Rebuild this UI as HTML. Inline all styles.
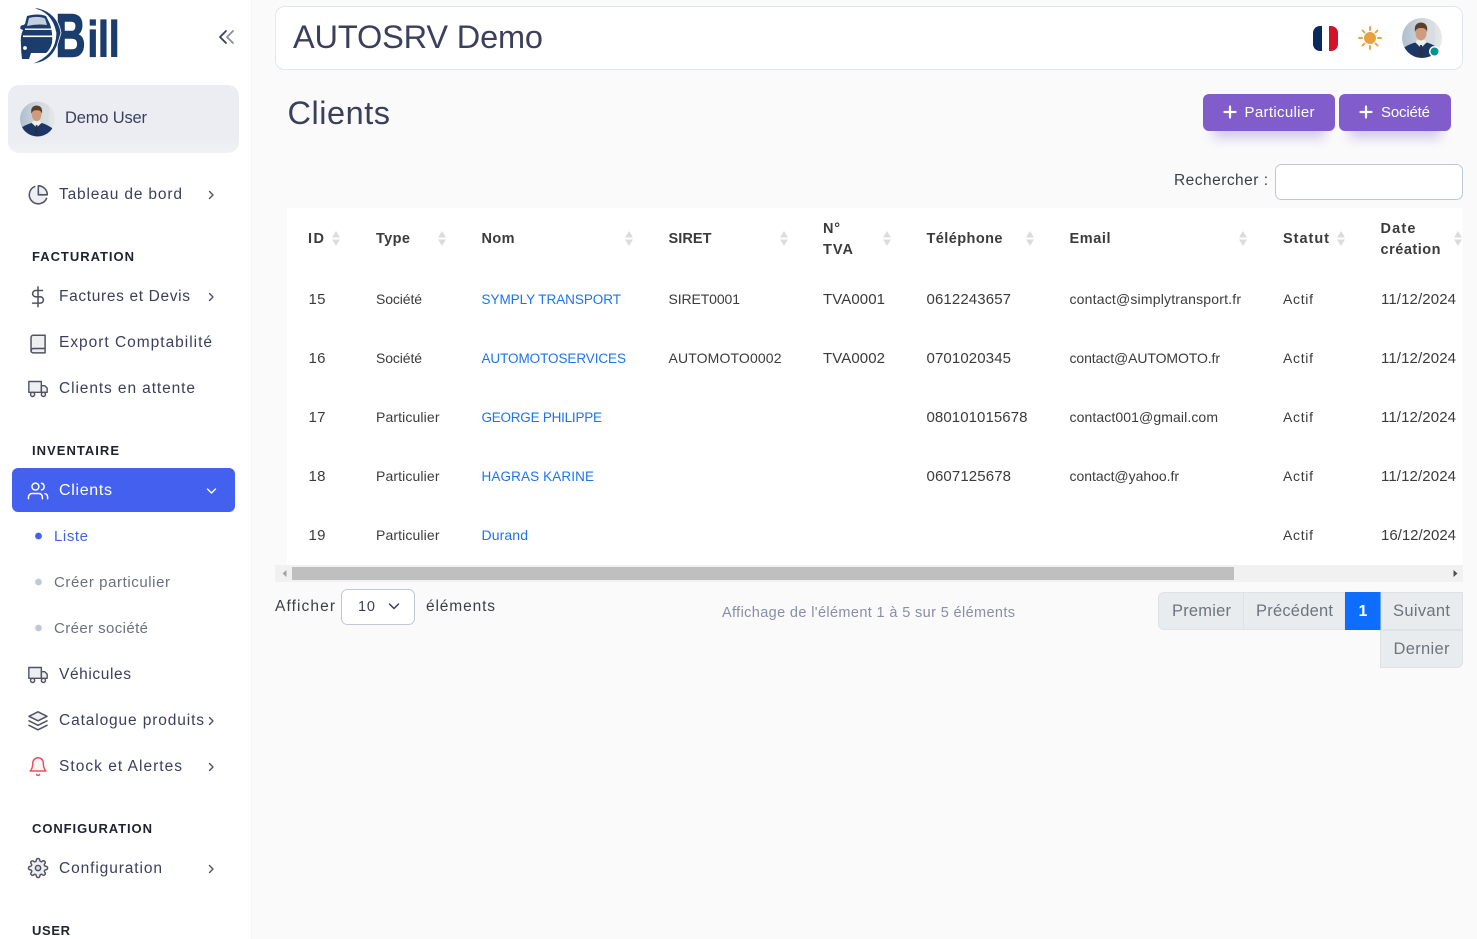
<!DOCTYPE html>
<html lang="fr">
<head>
<meta charset="utf-8">
<title>Clients</title>
<style>
html,body{margin:0;padding:0;background:#fafafa;width:1477px;height:939px;overflow:hidden}
svg{display:block}
text{font-family:"Liberation Sans",sans-serif;white-space:pre}
.nav{font-size:15.5px;fill:#3b3f5c}
.sec{font-size:13px;font-weight:bold;fill:#1f2230}
.sub{font-size:15px;fill:#6b7080}
.th{font-size:14.5px;font-weight:bold;fill:#3b3b3b}
.td{font-size:14px;fill:#3b3b3b}
.num{font-size:15px;fill:#3b3b3b}
.lnk{font-size:14px;fill:#1b74f0}
.lnu{font-size:13.5px;fill:#1b74f0}
.title{font-size:32.500px;fill:#3b3f5c}
.btn{font-size:15px;fill:#fff}
.lab{font-size:15.5px;fill:#3b3f46}
.pg{font-size:16.5px;fill:#6c757d}
.ic{fill:rgba(0,23,55,.07);stroke:#515365;stroke-width:1.7;stroke-linecap:round;stroke-linejoin:round}
.chev{fill:none;stroke:#515365;stroke-width:1.4;stroke-linecap:round;stroke-linejoin:round}
.ar{fill:#dcdcdc}
</style>
</head>
<body>
<svg width="1477" height="939" viewBox="0 0 1477 939" xmlns="http://www.w3.org/2000/svg">
<defs>
<linearGradient id="uc" x1="0" y1="0" x2="0" y2="1"><stop offset="0" stop-color="#ebedf2"/><stop offset=".8" stop-color="#ebedf2"/><stop offset="1" stop-color="#f0f2f6"/></linearGradient>
<linearGradient id="avbg" x1="0" y1="0" x2="1" y2="0"><stop offset="0" stop-color="#aebfcf"/><stop offset=".5" stop-color="#cfd6dd"/><stop offset="1" stop-color="#e8e8e8"/></linearGradient>
<clipPath id="avc"><circle cx="20" cy="20" r="20"/></clipPath>
<symbol id="av" viewBox="0 0 40 40">
<g clip-path="url(#avc)">
<rect width="40" height="40" fill="url(#avbg)"/>
<rect x="27" y="0" width="6" height="28" fill="#d6dde3"/>
<path d="M0 40V31Q5 27 13 24.500L19 27L25 24.500Q33 27 40 33V40Z" fill="#1c3765"/>
<path d="M13.500 24.500L19 30L24.500 24.500L22.500 21.500H15.500Z" fill="#eceef0"/>
<path d="M18 27H20L21 39H17Z" fill="#2a2f45"/>
<ellipse cx="19" cy="15" rx="5.500" ry="7.500" fill="#cf9b7c"/>
<path d="M13 14Q11.500 5 19 4.500Q26.500 5 25 14Q24 9.500 19 10Q14.500 9.500 13 14Z" fill="#5c3f28"/>
</g>
</symbol>
<symbol id="truck" viewBox="0 0 24 24"><rect x="1" y="3" width="15" height="13"/><polygon points="16 8 20 8 23 11 23 16 16 16 16 8"/><circle cx="5.500" cy="18.500" r="2.500"/><circle cx="18.500" cy="18.500" r="2.500"/></symbol>
</defs>

<!-- main background -->
<rect width="1477" height="939" fill="#fafafa"/>
<!-- sidebar -->
<rect x="0" y="0" width="251" height="939" fill="#fff"/>
<rect x="251" y="0" width="1" height="939" fill="#f5f5f6"/>

<!-- logo -->
<g>
<text x="55.500" y="56.500" textLength="30" lengthAdjust="spacingAndGlyphs" style="font-size:61px;font-weight:bold;fill:#1b3d6d;stroke:#1b3d6d;stroke-width:1.500">B</text>
<text x="87.500" y="56.500" textLength="32" lengthAdjust="spacingAndGlyphs" style="font-size:50px;font-weight:bold;fill:#1b3d6d;stroke:#1b3d6d;stroke-width:1.200">ill</text>
<path d="M31 8Q52 11 56 33Q56 55 31 64Q50 63 57 46L61 33Q58 13 38 8Z" fill="#1b3d6d" stroke="#fff" stroke-width=".8"/>
<path d="M27 16Q38 13 46 16L50 24Q53 33 52 43Q50 50 46 53H31L29 59H22Q21 52 21 45Q20 36 23 30L20.500 29Q19.500 25 23.500 25L25 24Z" fill="#1b3d6d"/>
<path d="M29 18Q38 15.500 45 18.500L47 25Q37 23.500 27 26Z" fill="#c3d0e0"/>
<rect x="25" y="28.500" width="27" height="1.400" fill="#fff"/>
<rect x="23" y="35.500" width="30" height="1.600" fill="#fff"/>
<circle cx="25" cy="48" r="1.900" fill="#fff"/>
</g>
<path d="M226 31L220 37L226 43" fill="none" stroke="#3b3f5c" stroke-width="1.800" stroke-linecap="round" stroke-linejoin="round"/>
<path d="M233 31L227 37L233 43" fill="none" stroke="#888ea8" stroke-width="1.800" stroke-linecap="round" stroke-linejoin="round"/>

<!-- user card -->
<rect x="8" y="85" width="231" height="68" rx="11" fill="url(#uc)"/>
<use href="#av" x="20" y="101" width="35" height="36"/>
<text class="nav" x="65" y="123" textLength="82" style="font-size:16.5px">Demo User</text>

<!-- nav -->
<g class="ic" transform="translate(27.500,184) scale(.9)"><path d="M21.210 15.890A10 10 0 1 1 8 2.830"/><path d="M22 12A10 10 0 0 0 12 2v10z"/></g>
<text class="nav" x="59" y="199" textLength="123">Tableau de bord</text>
<path class="chev" d="M209.500 191.500L213 195L209.500 198.500"/>

<text class="sec" x="32" y="261" textLength="102">FACTURATION</text>
<g class="ic" style="fill:none" transform="translate(27.200,286) scale(.9)"><path d="M12 1V23"/><path d="M17 5H9.500a3.500 3.500 0 0 0 0 7h5a3.500 3.500 0 0 1 0 7H6"/></g>
<text class="nav" x="59" y="301" textLength="131">Factures et Devis</text>
<path class="chev" d="M209.500 293.500L213 297L209.500 300.500"/>

<g class="ic" transform="translate(27.500,333.500) scale(.88)"><path d="M4 19.500A2.500 2.500 0 0 1 6.500 17H20"/><path d="M6.500 2H20v20H6.500A2.500 2.500 0 0 1 4 19.500v-15A2.500 2.500 0 0 1 6.500 2z"/></g>
<text class="nav" x="59" y="347" textLength="153">Export Comptabilité</text>

<use href="#truck" class="ic" x="28" y="379" width="20" height="20"/>
<text class="nav" x="59" y="393" textLength="136">Clients en attente</text>

<text class="sec" x="32" y="455" textLength="87">INVENTAIRE</text>
<rect x="12" y="468" width="223" height="44" rx="6" fill="#4361ee"/>
<g class="ic" style="stroke:#fff;fill:none" transform="translate(27.600,480.500) scale(.87)"><path d="M17 21v-2a4 4 0 0 0-4-4H5a4 4 0 0 0-4 4v2"/><circle cx="9" cy="7" r="4"/><path d="M23 21v-2a4 4 0 0 0-3-3.870"/><path d="M16 3.130a4 4 0 0 1 0 7.750"/></g>
<text x="59" y="495" textLength="53" style="font-size:16px;fill:#fff">Clients</text>
<path class="chev" style="stroke:#fff" d="M207.500 489L211.500 493L215.500 489"/>

<circle cx="38.500" cy="536" r="3.400" fill="#4361ee"/>
<text class="sub" x="54" y="541" textLength="34" style="fill:#4361ee">Liste</text>
<circle cx="38.500" cy="582" r="3.400" fill="#c0cad5"/>
<text class="sub" x="54" y="587" textLength="116">Créer particulier</text>
<circle cx="38.500" cy="628" r="3.400" fill="#c0cad5"/>
<text class="sub" x="54" y="633" textLength="94">Créer société</text>

<use href="#truck" class="ic" x="28" y="665" width="20" height="20"/>
<text class="nav" x="59" y="679" textLength="72">Véhicules</text>

<g class="ic" transform="translate(27.200,710) scale(.9)"><polygon points="12 2 2 7 12 12 22 7 12 2"/><polyline style="fill:none" points="2 17 12 22 22 17"/><polyline style="fill:none" points="2 12 12 17 22 12"/></g>
<text class="nav" x="59" y="725" textLength="145">Catalogue produits</text>
<path class="chev" d="M209.500 717.500L213 721L209.500 724.500"/>

<g class="ic" style="stroke:#e7515a;fill:rgba(231,81,90,.06)" transform="translate(27.500,756) scale(.88)"><path d="M18 8A6 6 0 0 0 6 8c0 7-3 9-3 9h18s-3-2-3-9"/><path d="M13.730 21a2 2 0 0 1-3.460 0"/></g>
<text class="nav" x="59" y="771" textLength="123">Stock et Alertes</text>
<path class="chev" d="M209.500 763.500L213 767L209.500 770.500"/>

<text class="sec" x="32" y="833" textLength="120">CONFIGURATION</text>
<g class="ic" transform="translate(27.600,857.600) scale(.87)"><circle cx="12" cy="12" r="3"/><path d="M19.400 15a1.650 1.650 0 0 0 .33 1.820l.06.06a2 2 0 0 1 0 2.830 2 2 0 0 1-2.830 0l-.06-.06a1.650 1.650 0 0 0-1.820-.33 1.650 1.650 0 0 0-1 1.510V21a2 2 0 0 1-2 2 2 2 0 0 1-2-2v-.09A1.650 1.650 0 0 0 9 19.400a1.650 1.650 0 0 0-1.820.33l-.06.06a2 2 0 0 1-2.830 0 2 2 0 0 1 0-2.830l.06-.06a1.650 1.650 0 0 0 .33-1.820 1.650 1.650 0 0 0-1.510-1H3a2 2 0 0 1-2-2 2 2 0 0 1 2-2h.09A1.650 1.650 0 0 0 4.600 9a1.650 1.650 0 0 0-.33-1.820l-.06-.06a2 2 0 0 1 0-2.830 2 2 0 0 1 2.830 0l.06.06a1.650 1.650 0 0 0 1.820.33H9a1.650 1.650 0 0 0 1-1.510V3a2 2 0 0 1 2-2 2 2 0 0 1 2 2v.09a1.650 1.650 0 0 0 1 1.510 1.650 1.650 0 0 0 1.820-.33l.06-.06a2 2 0 0 1 2.830 0 2 2 0 0 1 0 2.830l-.06.06a1.650 1.650 0 0 0-.33 1.820V9a1.650 1.650 0 0 0 1.510 1H21a2 2 0 0 1 2 2 2 2 0 0 1-2 2h-.09a1.650 1.650 0 0 0-1.510 1z"/></g>
<text class="nav" x="59" y="873" textLength="103">Configuration</text>
<path class="chev" d="M209.500 865.500L213 869L209.500 872.500"/>

<text class="sec" x="32" y="935" textLength="38">USER</text>

<!-- header -->
<rect x="275.500" y="6.500" width="1187" height="63" rx="9" fill="#fff" stroke="#e0e6ed"/>
<text class="title" x="293" y="48" textLength="250">AUTOSRV Demo</text>
<clipPath id="fl"><rect x="1313" y="26" width="25" height="25" rx="7"/></clipPath>
<g clip-path="url(#fl)"><rect x="1313" y="26" width="9" height="25" fill="#0a2a5e"/><rect x="1322" y="26" width="7" height="25" fill="#fff"/><rect x="1329" y="26" width="9" height="25" fill="#d2112c"/></g>
<g stroke="#e7a23f" stroke-width="1.900" stroke-linecap="round" fill="none">
<path d="M1370 27V30M1370 46V49M1359 38H1362M1378 38H1381M1362.500 30.500L1364.500 32.500M1375.500 43.500L1377.500 45.500M1362.500 45.500L1364.500 43.500M1375.500 32.500L1377.500 30.500"/>
</g>
<circle cx="1370" cy="38" r="6" fill="#e7a23f"/>
<use href="#av" x="1402" y="18" width="40" height="40"/>
<circle cx="1434.500" cy="51.500" r="5.500" fill="#fff"/>
<circle cx="1434.500" cy="51.500" r="4" fill="#009688"/>

<!-- title & buttons -->
<text class="title" x="287.500" y="124" textLength="102.500">Clients</text>
<defs><filter id="bs" x="-20%" y="-20%" width="140%" height="180%"><feGaussianBlur stdDeviation="6"/></filter></defs>
<rect x="1213" y="112" width="112" height="26" fill="#805dca" opacity=".32" filter="url(#bs)"/>
<rect x="1349" y="112" width="92" height="26" fill="#805dca" opacity=".32" filter="url(#bs)"/>
<rect x="1203" y="94" width="132" height="37" rx="6" fill="#805dca"/>
<rect x="1339" y="94" width="112" height="37" rx="6" fill="#805dca"/>
<path d="M1230 106.500V117.500M1224.500 112H1235.500M1366 106.500V117.500M1360.500 112H1371.500" stroke="#fff" stroke-width="2.200" stroke-linecap="round"/>
<text class="btn" x="1244.500" y="117" textLength="70">Particulier</text>
<text class="btn" x="1381" y="117" textLength="49">Société</text>

<!-- search -->
<text class="lab" x="1174" y="185" textLength="94">Rechercher :</text>
<rect x="1275.500" y="164.500" width="187" height="35" rx="6" fill="#fff" stroke="#bfc9d4"/>

<!-- table -->
<rect x="287" y="208" width="1176" height="357" fill="#fff"/>
<text class="th" x="308" y="243" textLength="16">ID</text>
<text class="th" x="376" y="243" textLength="34">Type</text>
<text class="th" x="481.500" y="243" textLength="33">Nom</text>
<text class="th" x="668.500" y="243" textLength="43">SIRET</text>
<text class="th" x="823" y="233" textLength="17">N°</text>
<text class="th" x="823" y="254" textLength="30">TVA</text>
<text class="th" x="926.500" y="243" textLength="76">Téléphone</text>
<text class="th" x="1069.500" y="243" textLength="41">Email</text>
<text class="th" x="1283" y="243" textLength="46">Statut</text>
<text class="th" x="1380.500" y="233" textLength="35">Date</text>
<text class="th" x="1380.500" y="254" textLength="60">création</text>

<g class="ar">
<path d="M336 231l4 6.500h-8zM336 246l4-6.500h-8z"/>
<path d="M442 231l4 6.500h-8zM442 246l4-6.500h-8z"/>
<path d="M629 231l4 6.500h-8zM629 246l4-6.500h-8z"/>
<path d="M784 231l4 6.500h-8zM784 246l4-6.500h-8z"/>
<path d="M887 231l4 6.500h-8zM887 246l4-6.500h-8z"/>
<path d="M1030 231l4 6.500h-8zM1030 246l4-6.500h-8z"/>
<path d="M1243 231l4 6.500h-8zM1243 246l4-6.500h-8z"/>
<path d="M1341 231l4 6.500h-8zM1341 246l4-6.500h-8z"/>
<path d="M1458 231l4 6.500h-8zM1458 246l4-6.500h-8z"/>
</g>

<text class="num" x="308.500" y="304" textLength="17">15</text>
<text class="td" x="376" y="304" textLength="46">Société</text>
<text class="lnu" x="481.500" y="304" textLength="139.500">SYMPLY TRANSPORT</text>
<text class="td" x="668.500" y="304" textLength="71.500">SIRET0001</text>
<text class="num" x="823" y="304" textLength="62">TVA0001</text>
<text class="num" x="926.500" y="304" textLength="84.500">0612243657</text>
<text class="td" x="1069.500" y="304" textLength="171.500">contact@simplytransport.fr</text>
<text class="td" x="1283" y="304" textLength="30">Actif</text>
<text class="num" x="1381" y="304" textLength="75">11/12/2024</text>

<text class="num" x="308.500" y="363" textLength="17">16</text>
<text class="td" x="376" y="363" textLength="46">Société</text>
<text class="lnu" x="481.500" y="363" textLength="144.500">AUTOMOTOSERVICES</text>
<text class="td" x="668.500" y="363" textLength="113">AUTOMOTO0002</text>
<text class="num" x="823" y="363" textLength="62">TVA0002</text>
<text class="num" x="926.500" y="363" textLength="84.500">0701020345</text>
<text class="td" x="1069.500" y="363" textLength="150.500">contact@AUTOMOTO.fr</text>
<text class="td" x="1283" y="363" textLength="30">Actif</text>
<text class="num" x="1381" y="363" textLength="75">11/12/2024</text>

<text class="num" x="308.500" y="422" textLength="17">17</text>
<text class="td" x="376" y="422" textLength="63.500">Particulier</text>
<text class="lnu" x="481.500" y="422" textLength="120.500">GEORGE PHILIPPE</text>
<text class="num" x="926.500" y="422" textLength="101">080101015678</text>
<text class="td" x="1069.500" y="422" textLength="148.500">contact001@gmail.com</text>
<text class="td" x="1283" y="422" textLength="30">Actif</text>
<text class="num" x="1381" y="422" textLength="75">11/12/2024</text>

<text class="num" x="308.500" y="481" textLength="17">18</text>
<text class="td" x="376" y="481" textLength="63.500">Particulier</text>
<text class="lnu" x="481.500" y="481" textLength="112.500">HAGRAS KARINE</text>
<text class="num" x="926.500" y="481" textLength="84.500">0607125678</text>
<text class="td" x="1069.500" y="481" textLength="109.500">contact@yahoo.fr</text>
<text class="td" x="1283" y="481" textLength="30">Actif</text>
<text class="num" x="1381" y="481" textLength="75">11/12/2024</text>

<text class="num" x="308.500" y="540" textLength="17">19</text>
<text class="td" x="376" y="540" textLength="63.500">Particulier</text>
<text class="lnk" x="481.500" y="540" textLength="46.500">Durand</text>
<text class="td" x="1283" y="540" textLength="30">Actif</text>
<text class="num" x="1381" y="540" textLength="75">16/12/2024</text>

<!-- scrollbar -->
<rect x="275" y="565" width="1188" height="17" fill="#f1f1f1"/>
<rect x="292" y="567" width="942" height="13" fill="#bfbfbf"/>
<path d="M286.500 570v7l-4-3.500z" fill="#a3a3a3"/>
<path d="M1453.500 570v7l4-3.500z" fill="#505050"/>

<!-- footer -->
<text class="lab" x="275" y="611" textLength="60">Afficher</text>
<rect x="341.500" y="589.500" width="73" height="35" rx="6" fill="#fff" stroke="#bfc9d4"/>
<text x="358" y="611" textLength="17" style="font-size:14.500px;fill:#3b3f5c">10</text>
<path d="M389.500 604L394 608.500L398.500 604" fill="none" stroke="#3b3f5c" stroke-width="1.500" stroke-linecap="round" stroke-linejoin="round"/>
<text class="lab" x="426" y="611" textLength="69">éléments</text>
<text x="722" y="617" textLength="293" style="font-size:14.500px;fill:#888ea8">Affichage de l'élément 1 à 5 sur 5 éléments</text>

<!-- pagination -->
<path d="M1345 592.500H1164a5.500 5.500 0 0 0-5.500 5.500v26a5.500 5.500 0 0 0 5.500 5.500H1345Z" fill="#e9ecef" stroke="#dee2e6"/>
<path d="M1243.500 592V630" stroke="#dee2e6"/>
<rect x="1345" y="592" width="36" height="38" fill="#0d6efd"/>
<path d="M1381 592.500H1462.500V629.500H1381Z" fill="#e9ecef" stroke="#dee2e6"/>
<path d="M1380.500 630.500H1462.500V662a5.500 5.500 0 0 1-5.500 5.500H1380.500Z" fill="#e9ecef" stroke="#dee2e6"/>
<text class="pg" x="1172" y="616" textLength="59">Premier</text>
<text class="pg" x="1256" y="616" textLength="77">Précédent</text>
<text x="1358.500" y="616" textLength="8.500" style="font-size:16px;font-weight:bold;fill:#fff">1</text>
<text class="pg" x="1393" y="616" textLength="57">Suivant</text>
<text class="pg" x="1393.500" y="654" textLength="56">Dernier</text>
</svg>
</body>
</html>
